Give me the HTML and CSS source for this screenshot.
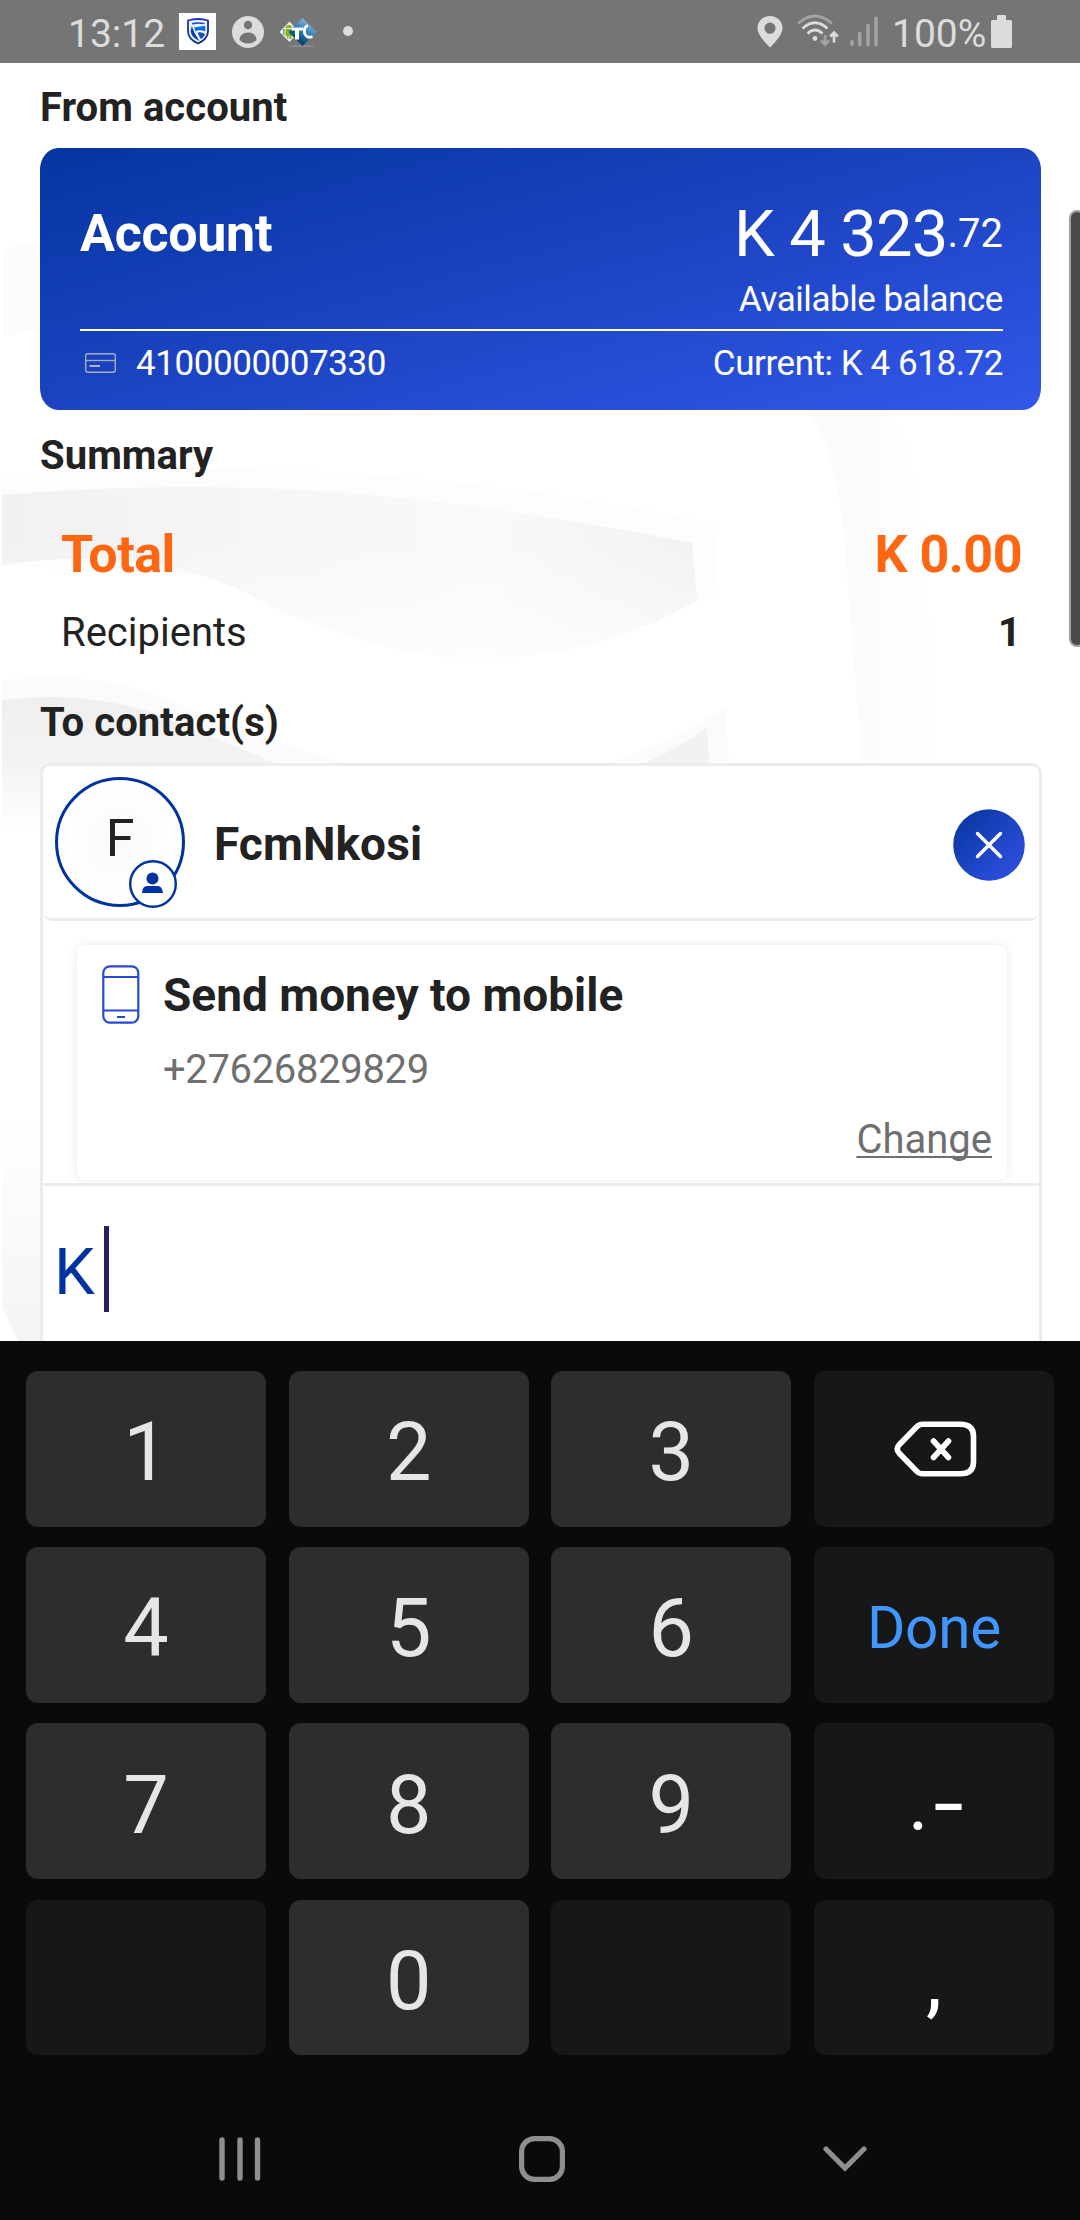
FILE: index.html
```html
<!DOCTYPE html>
<html lang="en">
<head>
<meta charset="utf-8">
<title>Send money</title>
<link rel="stylesheet" href="styles.css">
</head>
<body>
<header class="status-bar">
  <span class="clock">13:12</span>
  <svg class="ico-bank" viewBox="0 0 37 37" width="37" height="37">
    <defs>
      <linearGradient id="shield" x1="0" y1="0" x2="1" y2="1"><stop offset="0" stop-color="#1a2fd6"/><stop offset="1" stop-color="#0a2a6e"/></linearGradient>
    </defs>
    <rect width="37" height="37" fill="#fff"/>
    <path d="M9 7.500Q19 4.500 29 7.500V18Q29 26 19 30.500Q9 26 9 18Z" fill="#eef5fc" stroke="url(#shield)" stroke-width="1.800"/>
    <path d="M13 9.800Q20 8.300 26.500 10.300L24 11.300Q19 10 13.500 11.800Z" fill="#1f3fd8"/>
    <path d="M15 14.500L26.300 12.800V18.500Q21 16 16.500 18.300Z" fill="#0b6be0"/>
    <path d="M12.800 13L15.800 20.500L20.500 28L17.500 26.500Q12 23 11.600 18Z" fill="#0d3fae"/>
    <path d="M18.500 19.500Q23 18.500 26.300 21.500L23.500 25L21.500 26Z" fill="#1a4fae"/>
  </svg>
  <svg class="ico-person" viewBox="0 0 32 32" width="32" height="32">
    <circle cx="16" cy="16" r="16" fill="#dcdcdc"/>
    <circle cx="16" cy="9" r="4.200" fill="#757575"/>
    <path d="M7.500 24Q8 16.500 16 16.500Q24 16.500 24.500 24Q21 27.500 16 27.500Q11 27.500 7.500 24Z" fill="#757575"/>
  </svg>
  <svg class="ico-tc" viewBox="0 0 38 30" width="38" height="30">
    <defs>
      <linearGradient id="tcblue" x1="1" y1="0" x2="0.400" y2="1"><stop offset="0.150" stop-color="#9db8e8"/><stop offset="0.500" stop-color="#3b86c0"/><stop offset="0.850" stop-color="#064a7d"/></linearGradient>
    </defs>
    <ellipse cx="23" cy="28" rx="13" ry="1.300" fill="#8a8a8a"/>
    <path d="M0.500 14L10.500 3.500L20 14L10.500 24Z" fill="#e6ece6"/>
    <path d="M4 11h1.500v6H4zM6.500 11h7v7h-1v3h-2v-3h-1v2.500h-1.500v-2.500h-1.500zM6.500 10Q7 7 10 7Q13 7 13.500 10Z" fill="#82b32c"/>
    <path d="M9.500 14L23.500 0L37.500 14L23.500 28Z" fill="url(#tcblue)"/>
    <path d="M12.500 9.500H24V12.500H20V21.500H16V12.500H12.500Z" fill="#fff"/>
    <path d="M29 7.500Q24.500 9 25.500 15Q27.500 21 33.500 18.500" fill="none" stroke="#fff" stroke-width="2.800"/>
  </svg>
  <span class="more-dot"></span>
  <span class="status-space"></span>
  <svg class="ico-pin" viewBox="0 0 26 32" width="26" height="32">
    <path fill-rule="evenodd" d="M13 0C5.800 0 0.500 5.300 0.500 12.200C0.500 20 13 31.500 13 31.500S25.500 20 25.500 12.200C25.500 5.300 20.200 0 13 0ZM13 6.600a5.600 5.600 0 1 1 0 11.200a5.600 5.600 0 1 1 0-11.200Z" fill="#dcdcdc"/>
  </svg>
  <svg class="ico-wifi" viewBox="0 0 42 34" width="42" height="34">
    <g fill="none" stroke-width="2.700">
      <path d="M1 9.500Q18 -5.500 35 9.500" stroke="#a3a3a3"/>
      <path d="M5.500 14.500Q18 3 30.500 14.500" stroke="#dcdcdc"/>
      <path d="M10.500 19.500Q18 12.500 25.500 19.500" stroke="#dcdcdc"/>
      <path d="M28 21V30.500M24 26.500L28 30.500L32 26.500" stroke="#a3a3a3"/>
      <path d="M37 28.500V19M33.200 22.500L37 18.700L40.800 22.500" stroke="#dcdcdc"/>
    </g>
    <circle cx="18" cy="24.500" r="2.400" fill="#dcdcdc"/>
  </svg>
  <svg class="ico-signal" viewBox="0 0 28 31" width="28" height="31">
    <path d="M2 25.500V28.500M9.700 17.500V28.500M18 9.500V28.500M26 2V28.500" stroke="#a3a3a3" stroke-width="3.600" stroke-linecap="round"/>
  </svg>
  <span class="battery-label">100%</span>
  <svg class="ico-battery" viewBox="0 0 21 33" width="21" height="33">
    <path d="M7 0H14Q15 0 15 1V5H19.500Q21 5 21 6.500V31.500Q21 33 19.500 33H1.500Q0 33 0 31.500V6.500Q0 5 1.500 5H6V1Q6 0 7 0Z" fill="#dcdcdc"/>
  </svg>
</header>

<main class="app">
  <svg class="watermark" viewBox="0 63 1080 1278" width="1080" height="1278" aria-hidden="true">
    <defs>
      <linearGradient id="wave" x1="0" y1="0" x2="1" y2="0"><stop offset="0" stop-color="#f1f1f1"/><stop offset="0.350" stop-color="#f6f6f6"/><stop offset="0.700" stop-color="#f9f9f9"/><stop offset="1" stop-color="#f2f2f2"/></linearGradient>
      <linearGradient id="wavefade" x1="0" y1="0" x2="0" y2="1"><stop offset="0.300" stop-color="#fff" stop-opacity="0"/><stop offset="1" stop-color="#fff" stop-opacity="0.650"/></linearGradient>
      <linearGradient id="lower" x1="0" y1="0" x2="0" y2="1"><stop offset="0" stop-color="#efefef"/><stop offset="0.500" stop-color="#f3f3f3"/><stop offset="1" stop-color="#fff"/></linearGradient>
      <linearGradient id="edge" x1="0" y1="0" x2="0" y2="1"><stop offset="0" stop-color="#fff"/><stop offset="1" stop-color="#f4f4f4"/></linearGradient>
      <linearGradient id="band" x1="0" y1="0" x2="1" y2="0"><stop offset="0.300" stop-color="#fbfbfb"/><stop offset="1" stop-color="#fff"/></linearGradient>
    </defs>
    <path d="M2 250Q20 244 42 246V332L2 336Z" fill="#fcfcfc"/>
    <path d="M805 408Q840 450 846 560L862 765H935Q940 600 915 480Q910 440 885 408Z" fill="url(#band)"/>
    <path d="M2 476Q100 462 330 472Q560 488 714 524L718 592L697 602L2 566Z" fill="#fdfdfd"/>
    <path d="M2 495Q180 480 350 493Q520 508 692 543L697 600Q600 658 475 658Q390 658 270 606Q160 540 2 565Z" fill="url(#wave)"/>
    <path d="M2 495Q180 480 350 493Q520 508 692 543L697 600Q600 658 475 658Q390 658 270 606Q160 540 2 565Z" fill="url(#wavefade)"/>
    <path d="M2 681Q90 668 170 700Q250 736 350 765H2Z" fill="#fbfbfb"/>
    <path d="M2 700Q80 690 150 712Q220 740 280 765L280 830H2Z" fill="url(#lower)"/>
    <path d="M600 765Q670 745 725 708L729 765Z" fill="#fbfbfb"/>
    <path d="M640 765Q680 748 707 728L709 765Z" fill="#f1f1f1"/>
    <path d="M2 1120H42V1341H18L2 1307Z" fill="url(#edge)"/>
  </svg>

  <h2 class="section-title">From account</h2>
  <section class="account-card">
    <div class="account-top">
      <span class="account-name">Account</span>
      <span class="balance"><span class="balance-main">K 4 323</span><span class="balance-cents">.72</span></span>
    </div>
    <div class="balance-caption">Available balance</div>
    <div class="account-bottom">
      <svg class="ico-card" viewBox="0 0 31 20" width="31" height="20">
        <rect x="0.700" y="0.700" width="29.600" height="18.600" rx="2" fill="none" stroke="#a9abc0" stroke-width="1.400"/>
        <path d="M1 7.500H30" stroke="#a9abc0" stroke-width="1.300"/>
        <path d="M4.500 13H15" stroke="#b5b5b5" stroke-width="2"/>
      </svg>
      <span class="account-number">4100000007330</span>
      <span class="account-current">Current: K 4 618.72</span>
    </div>
  </section>

  <h2 class="section-title summary-title">Summary</h2>
  <div class="total-row"><span>Total</span><span>K 0.00</span></div>
  <div class="recipients-row"><span>Recipients</span><b>1</b></div>

  <h2 class="section-title contacts-title">To contact(s)</h2>
  <section class="contact-card">
    <div class="contact-head">
      <div class="avatar">
        <span class="avatar-letter">F</span>
        <svg class="avatar-badge" viewBox="0 0 48 48" width="48" height="48">
          <circle cx="24" cy="24" r="22.800" fill="#fff" stroke="#0033a1" stroke-width="2.400"/>
          <circle cx="23.500" cy="18.500" r="6" fill="#0033a1"/>
          <path d="M13 33Q13.500 26 18 26H29Q33 26 34 33Z" fill="#0033a1"/>
        </svg>
      </div>
      <span class="contact-name">FcmNkosi</span>
      <svg class="ico-remove" viewBox="0 0 72 72" width="72" height="72">
        <defs><linearGradient id="rm" x1="0" y1="0" x2="1" y2="1"><stop offset="0.100" stop-color="#0a38a4"/><stop offset="0.900" stop-color="#2e50e0"/></linearGradient></defs>
        <circle cx="36" cy="36" r="35.800" fill="url(#rm)"/>
        <path d="M24.500 24.500L47.500 47.500M47.500 24.500L24.500 47.500" stroke="#fff" stroke-width="3.400" stroke-linecap="round"/>
      </svg>
    </div>
    <div class="method-area">
      <div class="method-card">
        <svg class="ico-phone" viewBox="0 0 38 59" width="38" height="59">
          <g fill="none" stroke="#2749d6" stroke-width="2.200">
            <rect x="1.300" y="1.300" width="35" height="56.400" rx="6.500"/>
            <path d="M1.300 12H36.300M1.300 45.500H36.300M15 52H23"/>
          </g>
        </svg>
        <div class="method-text">
          <div class="method-title">Send money to mobile</div>
          <div class="method-phone">+27626829829</div>
          <a class="method-change">Change</a>
        </div>
      </div>
    </div>
    <div class="amount-row"><span class="amount-currency">K</span><span class="caret"></span></div>
  </section>
  <div class="scroll-thumb"></div>
</main>

<section class="keyboard">
  <div class="keys">
    <div class="key">1</div><div class="key">2</div><div class="key">3</div>
    <div class="key dark">
      <svg class="ico-backspace" viewBox="0 0 84 56" width="84" height="56">
        <path d="M28.500 3.200H66Q79.500 3.200 79.500 15V41Q79.500 52.800 66 52.800H28.500Q25 52.800 22.500 50L5 32Q1.500 28 5 24L22.500 6Q25 3.200 28.500 3.200Z" fill="none" stroke="#fff" stroke-width="5.600" stroke-linejoin="round"/>
        <path d="M39.500 20L54.500 36.500M54.500 20L39.500 36.500" stroke="#fff" stroke-width="5.600" stroke-linecap="round"/>
      </svg>
    </div>
    <div class="key">4</div><div class="key">5</div><div class="key">6</div><div class="key dark done">Done</div>
    <div class="key">7</div><div class="key">8</div><div class="key">9</div><div class="key dark symbols">.<span class="dash">-</span></div>
    <div class="key dark"></div><div class="key">0</div><div class="key dark"></div><div class="key dark comma">,</div>
  </div>
  <nav class="nav-bar">
    <svg viewBox="0 0 42 44" width="42" height="44"><path d="M3 3V41M21 3V41M38.500 3V41" stroke="#8f8f8f" stroke-width="5.400" stroke-linecap="round"/></svg>
    <svg viewBox="0 0 46 46" width="46" height="46"><rect x="2.600" y="2.600" width="40.800" height="40.800" rx="13" fill="none" stroke="#8f8f8f" stroke-width="5.200"/></svg>
    <svg viewBox="0 0 44 26" width="44" height="26"><path d="M3 3L22 22L41 3" fill="none" stroke="#8f8f8f" stroke-width="5.200" stroke-linecap="round"/></svg>
  </nav>
</section>
</body>
</html>
```

FILE: styles.css
```css
* { box-sizing: border-box; }

body {
  margin: 0;
  width: 1080px;
  height: 2220px;
  display: flex;
  flex-direction: column;
  overflow: hidden;
  background: #fff;
  color: #222;
  font-family: Roboto, sans-serif;
}

svg { display: block; flex: none; }

/* Status bar */
.status-bar {
  height: 63px;
  flex: none;
  display: flex;
  align-items: flex-start;
  padding: 0 68px 0 68px;
  background: #757575;
  color: #dcdcdc;
  font-size: 39px;
  line-height: 46px;
}
.clock { width: 111px; margin-top: 11px; }
.ico-bank { margin-top: 13px; }
.ico-person { margin: 16px 0 0 16px; }
.ico-tc { margin: 18px 0 0 15px; }
.more-dot {
  width: 10px;
  height: 10px;
  margin: 26px 0 0 26px;
  border-radius: 50%;
  background: #dcdcdc;
}
.status-space { flex: 1; }
.ico-pin { margin: 16px 14px 0 0; }
.ico-wifi { margin: 14px 11px 0 0; }
.ico-signal { margin: 16px 14px 0 0; }
.battery-label { width: 99px; margin-top: 11px; }
.ico-battery { margin-top: 15px; }

/* App content */
.app {
  position: relative;
  z-index: 0;
  height: 1278px;
  flex: none;
  overflow: hidden;
  padding: 21px 38px 0 40px;
}
.watermark { position: absolute; z-index: -1; left: 0; top: 0; }

.section-title {
  margin: 0;
  font-size: 40px;
  font-weight: 700;
  line-height: 48px;
  letter-spacing: 0.05px;
}
.summary-title { margin-top: 22px; }
.contacts-title { margin-top: 42px; letter-spacing: 0.1px; }

.account-card {
  width: 1001px;
  height: 262px;
  margin-top: 16px;
  padding: 48px 38px 0 40px;
  border-radius: 18px / 22px;
  background: linear-gradient(to bottom right, #0435a0 0%, #1c44c2 50%, #3257ea 100%);
  color: #fff;
  font-size: 35px;
  line-height: 40px;
  letter-spacing: -0.44px;
}
.account-top { display: flex; justify-content: space-between; height: 76px; }
.account-name { margin-top: 8px; font-size: 52px; font-weight: 700; line-height: 60px; letter-spacing: -0.3px; }
.balance { display: flex; }
.balance-main { font-size: 65px; line-height: 76px; letter-spacing: -0.8px; }
.balance-cents { margin-top: 14px; font-size: 40px; line-height: 48px; letter-spacing: 0; }
.balance-caption { margin-top: 8px; text-align: right; }
.account-bottom {
  display: flex;
  margin-top: 9px;
  padding: 13px 0 0 5px;
  border-top: 2px solid #fff;
}
.ico-card { margin-top: 9px; }
.account-number { margin-left: 20px; flex: 1; }

.total-row {
  display: flex;
  justify-content: space-between;
  margin-top: 45px;
  padding: 0 20px 0 21px;
  color: #ff6611;
  font-size: 52px;
  font-weight: 700;
  line-height: 60px;
  letter-spacing: -0.5px;
}
.recipients-row {
  display: flex;
  justify-content: space-between;
  margin-top: 24px;
  padding: 0 21px 0 21px;
  font-size: 40px;
  line-height: 48px;
}

/* Contact */
.contact-card {
  height: 640px;
  margin-top: 16px;
  border: 3px solid #ececec;
  border-radius: 10px;
  background: #fff;
}
.contact-head {
  display: flex;
  height: 155px;
  padding: 11px 14px 0 12px;
  border-bottom: 3px solid #ececec;
  border-radius: 0 0 9px 9px;
}
.avatar {
  position: relative;
  width: 130px;
  height: 130px;
  border: 3px solid #0033a1;
  border-radius: 50%;
  background: radial-gradient(circle at 50% 50%, #fafafa, #fff 75%);
}
.avatar-letter {
  display: block;
  margin-top: 29px;
  text-align: center;
  font-size: 52px;
  line-height: 60px;
}
.avatar-badge { position: absolute; left: 71px; top: 80px; }
.contact-name {
  flex: 1;
  margin: 39px 0 0 29px;
  font-size: 46px;
  font-weight: 700;
  line-height: 56px;
  letter-spacing: 0.1px;
}
.ico-remove { margin-top: 32px; }

.method-area {
  height: 265px;
  padding: 24px 32px 0 34px;
  overflow: hidden;
  border-bottom: 3px solid #ececec;
}
.method-card {
  display: flex;
  height: 235px;
  padding: 20px 15px 0 25px;
  border-radius: 9px;
  background: #fff;
  box-shadow: 0 0 12px rgba(0, 0, 0, 0.09);
}
.method-text { flex: 1; display: flex; flex-direction: column; margin-left: 23px; }
.method-title { margin-top: 2px; font-size: 46px; font-weight: 700; line-height: 56px; }
.method-phone, .method-change { color: #6f6f6f; font-size: 40px; line-height: 48px; }
.method-phone { margin-top: 23px; letter-spacing: -0.35px; }
.method-change {
  align-self: flex-end;
  margin-top: 22px;
  text-decoration: underline;
  text-decoration-skip-ink: none;
  text-decoration-thickness: 2px;
  text-underline-offset: 3px;
}

.amount-row { display: flex; padding: 40px 0 0 11px; height: 180px; }
.amount-currency { width: 50px; margin-top: 8px; color: #0033a1; font-size: 65px; line-height: 76px; }
.caret { width: 5px; height: 86px; background: #262262; }

.scroll-thumb {
  position: absolute;
  top: 147px;
  right: -5px;
  width: 16px;
  height: 437px;
  border: 2px solid #a0a0a0;
  border-radius: 12px;
  background: #4a4a4a;
}

/* Keyboard */
.keyboard {
  flex: 1;
  padding: 30px 26px 0;
  background: #0a0a0a;
}
.keys {
  display: grid;
  grid-template-columns: repeat(4, 240px);
  grid-template-rows: repeat(4, 155.500px);
  justify-content: space-between;
  row-gap: 20.700px;
}
.key {
  display: flex;
  align-items: center;
  justify-content: center;
  padding-top: 9px;
  border-radius: 12px;
  background: #2d2d2d;
  color: #e6e6e6;
  font-size: 81px;
  line-height: 96px;
}
.key.dark { background: #171717; color: #fff; padding: 0; }
.ico-backspace { margin-left: 5px; }
.key.done { color: #3f97ff; font-size: 58.500px; padding-top: 7px; letter-spacing: -0.3px; }
.key.symbols { font-size: 78px; padding-top: 6px; }
.dash { margin-left: 8px; font-size: 84px; transform: scaleX(1.3); }
.key.comma { font-size: 81px; padding-top: 8px; }

.nav-bar {
  display: flex;
  justify-content: space-between;
  align-items: center;
  margin-top: 81px;
  height: 46px;
  padding: 0 187px 0 193px;
}
```
